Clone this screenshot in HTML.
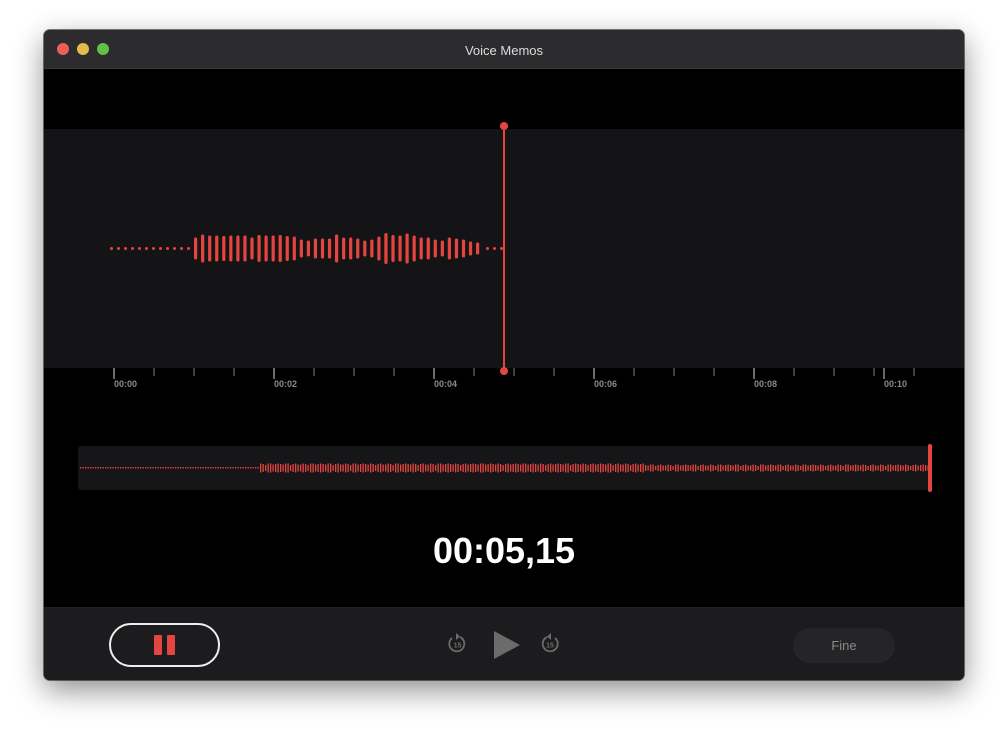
<!DOCTYPE html>
<html><head><meta charset="utf-8"><style>
body{margin:0;width:1008px;height:739px;background:#fff;position:relative;overflow:hidden;font-family:"Liberation Sans",sans-serif}
.win{position:absolute;left:44px;top:30px;width:920px;height:650px;background:#000;border-radius:6px;overflow:hidden;box-shadow:0 10px 30px rgba(0,0,0,.45),0 0 0 1px rgba(0,0,0,.5)}
.title{position:absolute;left:0;top:0;width:920px;height:38px;background:#2c2c2e;border-bottom:1px solid #3a3a3a;color:#ddd;font-size:13px;text-align:center;line-height:41px}
.dot{position:absolute;top:13px;width:12px;height:12px;border-radius:50%}
.bottom{position:absolute;left:0;top:577px;width:920px;height:73px;background:#1c1c1e;border-top:1px solid #222}
.pause{position:absolute;left:65px;top:15px;width:107px;height:40px;border:2px solid #eee;border-radius:22px}
.pause i{position:absolute;top:10px;width:8px;height:20px;background:#e5453f;border-radius:1px}
.fine{position:absolute;left:749px;top:20px;width:102px;height:35px;background:#252527;border-radius:17px;color:#8a8a8a;font-size:13px;text-align:center;line-height:35px}
</style></head><body>
<div class="win">
<div class="title">Voice Memos
<div class="dot" style="left:13px;background:#ec5f58"></div>
<div class="dot" style="left:33px;background:#e4bb4a"></div>
<div class="dot" style="left:53px;background:#60c04a"></div>
</div>
<svg style="position:absolute;left:0;top:0" width="920" height="577">
<rect x="0" y="99" width="920" height="239" fill="#141417"/>
<g fill="#e5453f" id="wave"></g>
<g stroke="#555" stroke-width="1.5" id="ticks"></g>
<g fill="#8a8a8a" font-size="9" font-weight="bold" font-family="Liberation Sans">
<text x="70" y="357">00:00</text><text x="230" y="357">00:02</text><text x="390" y="357">00:04</text><text x="550" y="357">00:06</text><text x="710" y="357">00:08</text><text x="840" y="357">00:10</text>
</g>
<line x1="460" y1="96" x2="460" y2="341" stroke="#e5453f" stroke-width="2"/>
<circle cx="460" cy="96" r="4" fill="#e5453f"/><circle cx="460" cy="341" r="4" fill="#e5453f"/>
<rect x="34" y="416" width="852" height="44" rx="3" fill="#161618"/>
<g id="ov" fill="#e5453f"></g>
<rect x="884" y="414" width="4" height="48" rx="2" fill="#e5453f"/>
<text x="460" y="533" text-anchor="middle" fill="#fff" font-size="36" font-weight="bold" font-family="Liberation Sans">00:05,15</text>
</svg>
<div class="bottom">
<svg style="position:absolute;left:400px;top:20px" width="130" height="34"></svg>
<div class="pause"><i style="left:43px"></i><i style="left:56px"></i></div>
<svg style="position:absolute;left:400px;top:20px" width="130" height="34">
<g fill="none" stroke="#6b6b6b" stroke-width="1.8">
<path d="M8 10 A7.5 7.5 0 1 0 16 9"/><path d="M111 10 A7.5 7.5 0 1 1 103 9"/>
</g>
<path d="M12 5 L16 8.5 L12 12Z" fill="#6b6b6b"/><path d="M107 5 L103 8.5 L107 12Z" fill="#6b6b6b"/>
<text x="13.5" y="19.5" font-size="7" fill="#6b6b6b" text-anchor="middle" font-family="Liberation Sans" font-weight="bold">15</text>
<text x="106" y="19.5" font-size="7" fill="#6b6b6b" text-anchor="middle" font-family="Liberation Sans" font-weight="bold">15</text>
<path d="M50 3 L76 17 L50 31Z" fill="#6b6b6b"/>
</svg>
<div class="fine">Fine</div>
</div>
</div>
<script>
var w=document.getElementById('wave'),s='';
for(var x=66;x<146;x+=7)s+='<rect x="'+x+'" y="217" width="3" height="3" rx="1.5"/>';
var h=[22,28,26,26,25,26,26,26,22,27,26,26,27,25,24,18,16,20,20,20,28,22,22,20,16,18,24,31,27,26,30,26,22,22,18,16,22,20,18,14,12];
for(var i=0;i<h.length;i++){var x=150+i*7.05;s+='<rect x="'+x+'" y="'+(218.5-h[i]/2)+'" width="3.2" height="'+h[i]+'" rx="1.5"/>';}
for(var x=442;x<458;x+=7)s+='<rect x="'+x+'" y="217" width="3" height="3" rx="1.5"/>';
w.innerHTML=s;
var t='',maj=[70,230,390,550,710,840];
for(var x=70;x<=880;x+=40){t+='<line x1="'+x+'" y1="338" x2="'+x+'" y2="346"/>';}
maj.forEach(function(x){t+='<line x1="'+x+'" y1="338" x2="'+x+'" y2="349" stroke="#888"/>';});
document.getElementById('ticks').innerHTML=t;
var o='';
for(var x=36;x<216;x+=2.5)o+='<rect x="'+x+'" y="437" width="1.3" height="1.5"/>';
for(var x=216;x<884;x+=2.5){var hh=4+Math.round(3*Math.abs(Math.sin(x*0.37)))+(x<600?2:0);o+='<rect x="'+x+'" y="'+(438-hh/2)+'" width="1.3" height="'+hh+'"/>';}
document.getElementById('ov').innerHTML=o;
</script>
</body></html>
